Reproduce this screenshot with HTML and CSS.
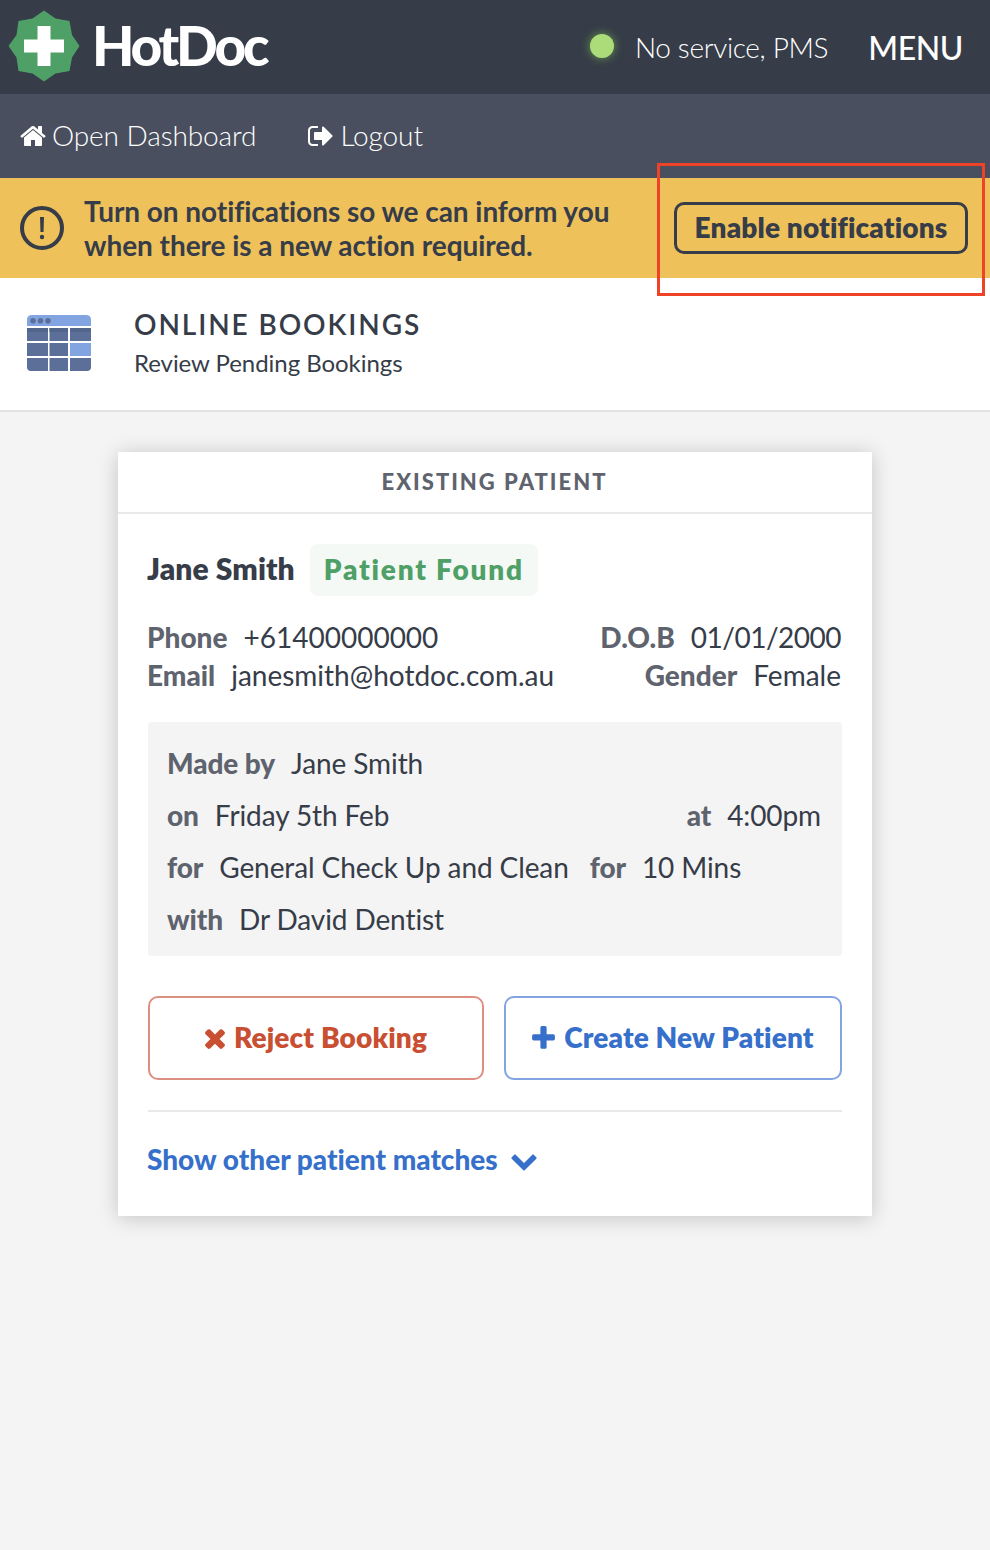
FILE: index.html
```html
<!DOCTYPE html>
<html lang="en">
<head>
    <meta charset="UTF-8">
    <meta name="viewport" content="width=device-width, initial-scale=1.0">
    <title>HotDoc - Online Bookings</title>
    <link rel="stylesheet" href="styles.css">
</head>
<body>
    <header class="topbar">
        <a class="logo" href="#">
            <svg class="logo-mark" viewBox="0 0 72 72">
                <path fill="#4fa066" d="M36 0.5L47.5 8.5L61.5 11L64 25L71.5 36L64 47.5L61.5 61L47.5 63.5L36 71.5L24.5 63.5L10.5 61L8.5 47.5L0.5 36L8.5 25L10.5 11L24.5 8.5Z"/>
                <path fill="#fff" d="M29.5 16h13v13.5H56v13H42.5V56h-13V42.5H16v-13h13.5z"/>
            </svg>
            <span class="logo-text">HotDoc</span>
        </a>
        <span class="status-dot"></span>
        <span class="status">No service, PMS</span>
        <a class="menu" href="#">MENU</a>
    </header>

    <nav class="subnav">
        <a class="nav-link" href="#">
            <svg class="icon" viewBox="64 0 1664 1792"><path d="M1472 992v480q0 26-19 45t-45 19h-384v-384h-256v384h-384q-26 0-45-19t-19-45v-480q0-1 .5-3t.5-3l575-474 575 474q1 2 1 6zm223-69l-62 74q-8 9-21 11h-3q-13 0-21-7l-692-577-692 577q-12 8-24 7-13-2-21-11l-62-74q-8-10-7-23.5t11-21.5l719-599q32-26 76-26t76 26l244 204v-195q0-14 9-23t23-9h192q14 0 23 9t9 23v408l219 182q10 8 11 21.5t-7 23.5z"/></svg>
            <span>Open Dashboard</span>
        </a>
        <a class="nav-link" href="#">
            <svg class="icon" viewBox="0 0 1664 1792"><path d="M640 1440q0 4 1 20t.5 26.5-3 23.5-10 19.5-20.5 6.5h-320q-119 0-203.5-84.5t-84.5-203.5v-704q0-119 84.5-203.5t203.5-84.5h320q13 0 22.500 9.500t9.500 22.500q0 4 1 20t.5 26.500-3 23.500-10 19.500-20.500 6.500h-320q-66 0-113 47t-47 113v704q0 66 47 113t113 47h312l11.500 1 11.500 3 8 5.500 7 9 2 13.500zm928-544q0 26-19 45l-544 544q-19 19-45 19t-45-19-19-45v-288h-448q-26 0-45-19t-19-45v-384q0-26 19-45t45-19h448v-288q0-26 19-45t45-19 45 19l544 544q19 19 19 45z"/></svg>
            <span>Logout</span>
        </a>
    </nav>

    <section class="notice">
        <svg class="notice-icon" viewBox="0 0 44 44">
            <circle cx="22" cy="22" r="20" fill="none" stroke="#363c48" stroke-width="4"/>
            <path fill="#363c48" d="M20 11h4l-.5 15h-3z"/>
            <circle cx="22" cy="31" r="2.200" fill="#363c48"/>
        </svg>
        <p class="notice-text">Turn on notifications so we can inform you<br>when there is a new action required.</p>
        <button class="enable-btn">Enable notifications</button>
        <span class="highlight"></span>
    </section>

    <section class="page-head">
        <svg class="calendar" viewBox="0 0 64 56">
            <path fill="#82a5e2" d="M0 11V5q0-5 5-5h54q5 0 5 5v6z"/>
            <g fill="#5b6f99">
                <circle cx="6" cy="5.700" r="2.800"/>
                <circle cx="13.500" cy="5.700" r="2.800"/>
                <circle cx="21" cy="5.700" r="2.800"/>
                <path d="M0 13h21v13H0zM22.500 13h18.500v13H22.500zM43 13h21v13H43zM0 28h21v13H0zM22.500 28h18.500v13H22.500zM0 43h21v13H4q-4 0-4-4zM22.500 43h18.500v13H22.500zM43 43h21v9q0 4-4 4H43z"/>
            </g>
            <path fill="#51668a" d="M0 13h21v4H0zM22.500 13h18.500v4H22.500zM43 13h21v4H43z"/>
            <path fill="#82a5e2" d="M43 28h21v13H43z"/>
        </svg>
        <div>
            <h1>Online Bookings</h1>
            <p class="subtitle">Review Pending Bookings</p>
        </div>
    </section>

    <main class="card">
        <h2 class="card-title">Existing Patient</h2>
        <div class="card-body">
            <div class="patient">
                <h3>Jane Smith</h3>
                <span class="badge">Patient Found</span>
            </div>

            <div class="contact">
                <div class="row">
                    <div><b>Phone</b><span>+61400000000</span></div>
                    <div><b>D.O.B</b><span class="date">01/01/2000</span></div>
                </div>
                <div class="row">
                    <div><b>Email</b><span>janesmith@hotdoc.com.au</span></div>
                    <div><b>Gender</b><span>Female</span></div>
                </div>
            </div>

            <div class="booking">
                <div class="row"><div><b>Made by</b><span>Jane Smith</span></div></div>
                <div class="row">
                    <div><b>on</b><span>Friday 5th Feb</span></div>
                    <div><b>at</b><span>4:00pm</span></div>
                </div>
                <div class="row row-start">
                    <div><b>for</b><span>General Check Up and Clean</span></div>
                    <div><b>for</b><span>10 Mins</span></div>
                </div>
                <div class="row"><div><b>with</b><span>Dr David Dentist</span></div></div>
            </div>

            <div class="actions">
                <button class="btn btn-reject">
                    <svg class="icon-times" viewBox="302 0 1188 1792"><path d="M1490 1322q0 40-28 68l-136 136q-28 28-68 28t-68-28l-294-294-294 294q-28 28-68 28t-68-28l-136-136q-28-28-28-68t28-68l294-294-294-294q-28-28-28-68t28-68l136-136q28-28 68-28t68 28l294 294 294-294q28-28 68-28t68 28l136 136q28 28 28 68t-28 68l-294 294 294 294q28 28 28 68z"/></svg>
                    <span>Reject Booking</span>
                </button>
                <button class="btn btn-create">
                    <svg class="icon-plus" viewBox="192 0 1408 1792"><path d="M1600 736v192q0 40-28 68t-68 28h-416v416q0 40-28 68t-68 28h-192q-40 0-68-28t-28-68v-416h-416q-40 0-68-28t-28-68v-192q0-40 28-68t68-28h416v-416q0-40 28-68t68-28h192q40 0 68 28t28 68v416h416q40 0 68 28t28 68z"/></svg>
                    <span>Create New Patient</span>
                </button>
            </div>

            <a class="more" href="#">
                <span>Show other patient matches</span>
                <svg class="icon-chevron" viewBox="90 0 1612 1792"><path d="M1683 808l-742 741q-19 19-45 19t-45-19l-742-741q-19-19-19-45.500t19-45.500l166-165q19-19 45-19t45 19l531 531 531-531q19-19 45-19t45 19l166 165q19 19 19 45.500t-19 45.500z"/></svg>
            </a>
        </div>
    </main>
</body>
</html>
```

FILE: styles.css
```css
* {
    box-sizing: border-box;
}

body {
    margin: 0;
    min-height: 1550px;
    background-color: #f4f4f4;
    color: #363c48;
    font-family: Lato, sans-serif;
    font-size: 28px;
    font-variant-ligatures: none;
    letter-spacing: -0.1px;
}

h1, h2, h3, p {
    margin: 0;
}

a {
    color: inherit;
    text-decoration: none;
}

svg {
    display: block;
    flex: none;
    fill: currentColor;
}

button {
    font-family: inherit;
    font-size: 28px;
    font-weight: 800;
    font-variant-ligatures: none;
    letter-spacing: 0.15px;
    background: none;
    cursor: pointer;
}

/* Header */
.topbar {
    display: flex;
    align-items: center;
    height: 94px;
    padding: 0 27px 0 8px;
    background-color: #363c48;
    color: #fff;
}

.logo {
    display: flex;
    align-items: center;
    gap: 12px;
    margin-right: auto;
    padding-bottom: 2px;
}

.logo-mark {
    width: 72px;
    height: 72px;
}

.logo-text {
    padding-bottom: 2px;
    font-size: 55px;
    font-weight: 900;
    letter-spacing: -3.2px;
}

.status-dot {
    width: 24px;
    height: 24px;
    margin-right: 21px;
    margin-bottom: 2px;
    border-radius: 50%;
    background-color: #acdc79;
    box-shadow: 0 0 10px rgba(140, 220, 80, 0.6);
}

.status {
    margin-right: 40px;
    font-weight: 300;
    letter-spacing: -0.35px;
}

.menu {
    font-size: 32px;
    font-weight: 500;
    letter-spacing: -0.4px;
}

.subnav {
    display: flex;
    align-items: center;
    gap: 52px;
    height: 84px;
    padding: 0 20px;
    background-color: #494f5e;
    color: #fff;
    font-weight: 300;
}

.nav-link {
    display: flex;
    align-items: center;
    gap: 6px;
}

.nav-link span {
    padding-bottom: 2px;
}

.icon {
    width: 26px;
    height: 28px;
}

/* Notification banner */
.notice {
    position: relative;
    display: flex;
    align-items: center;
    height: 100px;
    padding: 0 22px 0 20px;
    background-color: #eec15a;
}

.notice-icon {
    width: 44px;
    height: 44px;
    margin-right: 20px;
}

.notice-text {
    font-weight: 700;
    line-height: 34px;
    letter-spacing: -0.05px;
}

.enable-btn {
    width: 294px;
    height: 52px;
    margin-left: auto;
    padding: 0 0 2px;
    border: 3px solid #363c48;
    border-radius: 10px;
    color: #363c48;
}

.highlight {
    position: absolute;
    top: -15px;
    right: 5px;
    width: 328px;
    height: 133px;
    border: 3px solid #ee4327;
}

/* Page heading */
.page-head {
    display: flex;
    align-items: center;
    gap: 43px;
    height: 134px;
    padding: 0 27px 2px;
    background-color: #fff;
    border-bottom: 2px solid #e3e3e3;
}

.calendar {
    width: 64px;
    height: 56px;
}

.page-head h1 {
    font-size: 28px;
    font-weight: 600;
    line-height: 40px;
    letter-spacing: 1.9px;
    text-transform: uppercase;
}

.subtitle {
    font-size: 24px;
    line-height: 38px;
    letter-spacing: -0.05px;
}

/* Booking card */
.card {
    width: 754px;
    height: 764px;
    margin: 40px auto;
    background-color: #fff;
    box-shadow: 0 2px 20px rgba(0, 0, 0, 0.2);
}

.card-title {
    height: 62px;
    padding-right: 1px;
    border-bottom: 2px solid #e9e9e9;
    color: #5e636e;
    font-size: 22px;
    font-weight: 900;
    line-height: 60px;
    letter-spacing: 2px;
    text-align: center;
    text-transform: uppercase;
}

.card-body {
    padding: 30px;
}

.patient {
    display: flex;
    align-items: center;
    gap: 15px;
    margin-bottom: 22px;
}

.patient h3 {
    margin-left: -1px;
    padding-bottom: 4px;
    font-size: 30px;
    font-weight: 800;
    letter-spacing: 0.1px;
}

.badge {
    width: 228px;
    padding-bottom: 2px;
    border-radius: 8px;
    background-color: #f4f9f6;
    color: #4fa066;
    font-weight: 800;
    line-height: 50px;
    letter-spacing: 1.8px;
    text-align: center;
}

.row {
    display: flex;
    justify-content: space-between;
    margin: 0 1px 0 -1px;
    line-height: 38px;
}

.row b {
    margin-right: 16px;
    color: #5e636e;
    font-weight: 900;
}

.contact {
    letter-spacing: 0;
}

.date {
    letter-spacing: -0.5px;
}

.row-start {
    justify-content: flex-start;
    gap: 21px;
}

.booking {
    margin: 28px 0 40px;
    padding: 15px 20px 11px;
    border-radius: 4px;
    background-color: #f4f4f4;
}

.booking .row {
    line-height: 52px;
}

.actions {
    display: grid;
    grid-template-columns: 336px 338px;
    gap: 20px;
    padding-bottom: 30px;
    border-bottom: 2px solid #e9e9e9;
}

.btn {
    display: flex;
    align-items: center;
    justify-content: center;
    gap: 9px;
    height: 84px;
    padding: 0;
    border: 2px solid;
    border-radius: 10px;
}

.btn span {
    padding-bottom: 2px;
}

.btn-reject {
    border-color: #dd9081;
    color: #c94f32;
}

.btn-create {
    border-color: #82a5e2;
    color: #3670cb;
}

.icon-times {
    width: 20px;
    height: 30px;
}

.icon-plus {
    width: 23px;
    height: 29px;
}

.more {
    display: flex;
    align-items: center;
    gap: 13px;
    margin: 28px 0 0 -1px;
    color: #3670cb;
    font-weight: 900;
    line-height: 38px;
    letter-spacing: 0;
}

.more span {
    padding-bottom: 2px;
}

.icon-chevron {
    width: 26px;
    height: 28px;
}
```
